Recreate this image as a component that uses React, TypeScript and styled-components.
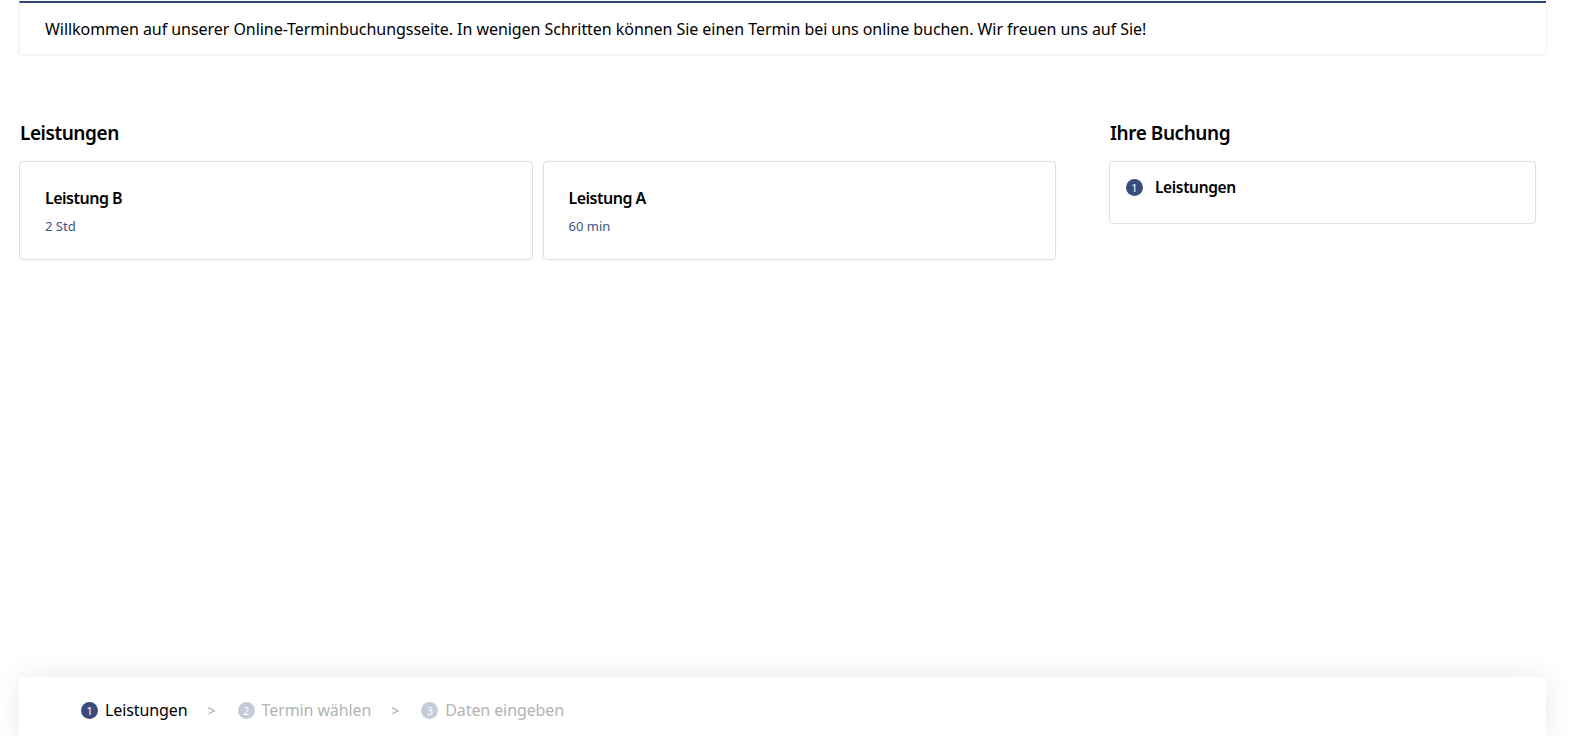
import React from 'react';
import styled, { createGlobalStyle } from 'styled-components';

const GlobalStyle = createGlobalStyle`
    html, body {
        margin: 0;
        padding: 0;
        background: #fff;
        overflow: hidden;
    }
    body {
        font-family: 'Noto Sans', 'Open Sans', sans-serif;
        color: #000;
    }
`;

interface IService {
    name: string;
    duration: string;
}

interface IStep {
    label: string;
}

const services: IService[] = [
    { name: 'Leistung B', duration: '2 Std' },
    { name: 'Leistung A', duration: '60 min' },
];

const steps: IStep[] = [
    { label: 'Leistungen' },
    { label: 'Termin wählen' },
    { label: 'Daten eingeben' },
];

const Page = styled.div`
    display: flex;
    flex-direction: column;
    min-height: calc(100vh + 7px);
    padding: 1px 33px 0 19px;
    box-sizing: border-box;
`;

const Welcome = styled.div`
    border-top: 2px solid #2c4579;
    background: #fff;
    box-shadow: 0 1px 3px rgba(0, 0, 0, 0.08);
    border-left: 1px solid #f1f1f1;
    padding: 15px 25px 14px;
    font-size: 16px;
    line-height: 22px;
    letter-spacing: -0.05px;
`;

const Main = styled.div`
    display: grid;
    grid-template-columns: 1037px 427px;
    column-gap: 53px;
    margin-top: 66px;
`;

const Column = styled.section`
    display: flex;
    flex-direction: column;
`;

const Heading = styled.h2`
    margin: 0 0 15px 1px;
    font-size: 19px;
    line-height: 26px;
    font-weight: 600;
    letter-spacing: -0.45px;
`;

const CardGrid = styled.div`
    display: grid;
    grid-template-columns: 1fr 1fr;
    gap: 10px;
`;

const Card = styled.div`
    border: 1px solid #dedede;
    border-radius: 4px;
    background: #fff;
    padding: 25px 25px;
    height: 99px;
    box-sizing: border-box;
    box-shadow: 0 0 4px rgba(0, 0, 0, 0.03);
    cursor: pointer;
`;

const CardTitle = styled.div`
    font-size: 16px;
    line-height: 22px;
    font-weight: 600;
    letter-spacing: -0.5px;
`;

const CardMeta = styled.div`
    margin-top: 9px;
    font-size: 13px;
    line-height: 16px;
    color: #3d5384;
`;

const SummaryCard = styled.div`
    border: 1px solid #dedede;
    border-radius: 4px;
    height: 63px;
    box-sizing: border-box;
    padding: 17px 16px;
    display: flex;
    align-items: flex-start;
    gap: 12px;
    box-shadow: 0 0 4px rgba(0, 0, 0, 0.03);
`;

const StepBadge = styled.span<{ $active?: boolean }>`
    display: inline-flex;
    align-items: center;
    justify-content: center;
    width: 17px;
    height: 17px;
    border-radius: 50%;
    background: ${(p) => (p.$active ? '#3b4b7c' : '#c6cbd9')};
    color: #fff;
    font-size: 11px;
    line-height: 1;
    flex-shrink: 0;
`;

const SummaryLabel = styled.span`
    font-size: 15.5px;
    line-height: 20px;
    font-weight: 600;
    letter-spacing: -0.35px;
    margin-top: -2px;
`;

const Footer = styled.nav`
    margin-top: auto;
    height: 66px;
    background: #fff;
    box-shadow: 0 0 30px rgba(0, 0, 0, 0.09);
    display: flex;
    align-items: center;
    padding-left: 62px;
`;

const Step = styled.div<{ $active?: boolean }>`
    display: flex;
    align-items: center;
    gap: 7px;
    font-size: 16px;
    letter-spacing: -0.1px;
    color: ${(p) => (p.$active ? '#000' : '#b3b3b3')};
`;

const Separator = styled.span`
    color: #a9a9a9;
    font-size: 14px;
    margin: 0 22px 0 20px;
`;

export default function App() {
    return (
        <>
            <GlobalStyle />
            <Page>
                <Welcome>
                    Willkommen auf unserer Online-Terminbuchungsseite. In wenigen Schritten können Sie einen Termin bei uns online buchen. Wir freuen uns auf Sie!
                </Welcome>
                <Main>
                    <Column>
                        <Heading>Leistungen</Heading>
                        <CardGrid>
                            {services.map((s) => (
                                <Card key={s.name}>
                                    <CardTitle>{s.name}</CardTitle>
                                    <CardMeta>{s.duration}</CardMeta>
                                </Card>
                            ))}
                        </CardGrid>
                    </Column>
                    <Column>
                        <Heading>Ihre Buchung</Heading>
                        <SummaryCard>
                            <StepBadge $active>1</StepBadge>
                            <SummaryLabel>Leistungen</SummaryLabel>
                        </SummaryCard>
                    </Column>
                </Main>
                <Footer>
                    {steps.map((step, i) => (
                        <React.Fragment key={step.label}>
                            {i > 0 && <Separator>&gt;</Separator>}
                            <Step $active={i === 0}>
                                <StepBadge $active={i === 0}>{i + 1}</StepBadge>
                                {step.label}
                            </Step>
                        </React.Fragment>
                    ))}
                </Footer>
            </Page>
        </>
    );
}
